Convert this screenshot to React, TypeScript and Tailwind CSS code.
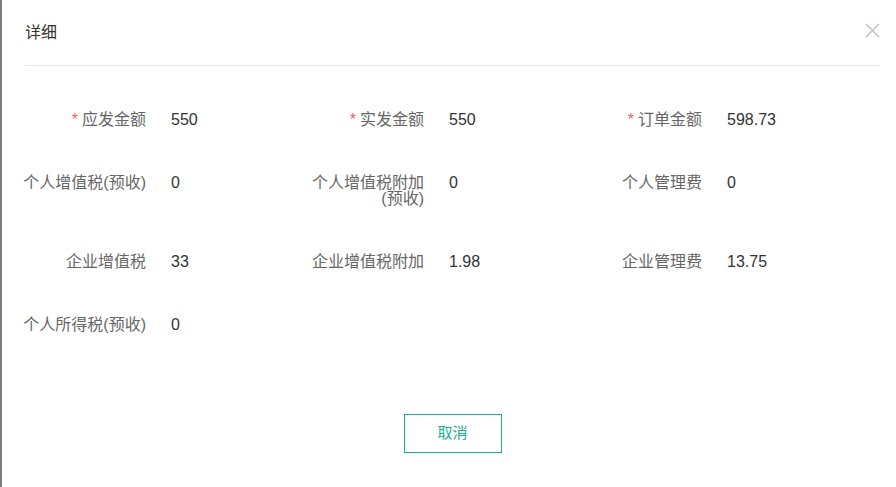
const fields: { label: string; value: string; required?: boolean }[] = [
  { label: '应发金额', value: '550', required: true },
  { label: '实发金额', value: '550', required: true },
  { label: '订单金额', value: '598.73', required: true },
  { label: '个人增值税(预收)', value: '0' },
  { label: '个人增值税附加(预收)', value: '0' },
  { label: '个人管理费', value: '0' },
  { label: '企业增值税', value: '33' },
  { label: '企业增值税附加', value: '1.98' },
  { label: '企业管理费', value: '13.75' },
  { label: '个人所得税(预收)', value: '0' },
];

export default function App() {
  return (
    <div
      className="flex h-[487px] w-[896px] overflow-hidden bg-white"
      style={{ fontFamily: '"Liberation Sans", "Noto Sans CJK SC", sans-serif' }}
    >
      <div className="w-[2px] shrink-0 bg-[#7d7d7d]" />
      <div className="ml-[23px] flex w-[855px] flex-col">
        {/* header */}
        <div className="relative flex h-[65px] items-center">
          <span className="mt-[1px] text-[16px] leading-4 text-[#333]">详细</span>
          <button className="absolute right-0 top-[23px] text-[#c4c4c4]">
            <svg width="15" height="15" viewBox="0 0 15 15">
              <path d="M1 1L14 14M14 1L1 14" stroke="currentColor" strokeWidth="1.6" />
            </svg>
          </button>
        </div>
        <div className="h-px bg-[#e8e8e8]" />

        {/* form */}
        <div className="mt-[46px] grid grid-cols-[278px_278px_278px] gap-y-[47px]">
          {fields.map((f) => (
            <div key={f.label} className="flex items-start">
              <div className="-ml-[4px] w-[125px] text-right text-[16px] leading-4 text-[#666]">
                {f.required && <span className="mr-[4px] text-[#f5606a]">*</span>}
                {f.label}
              </div>
              <div className="ml-[25px] text-[16px] leading-4 text-[#333]">{f.value}</div>
            </div>
          ))}
        </div>

        <div className="mt-[81px] flex justify-center">
          <button className="h-[39px] w-[98px] border border-[#1aad8f] text-[15px] text-[#1aad8f]">
            取消
          </button>
        </div>
      </div>
    </div>
  );
}
